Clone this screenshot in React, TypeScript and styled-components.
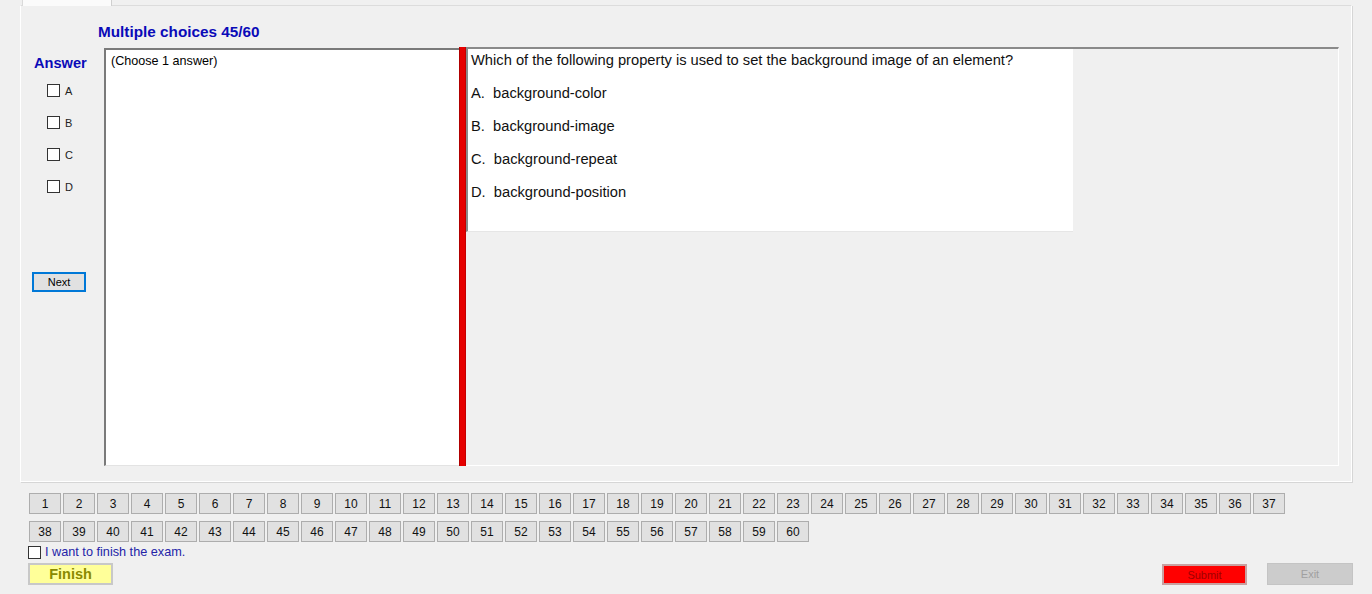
import React from "react";
import styled, { createGlobalStyle } from "styled-components";

const Global = createGlobalStyle`
  html, body { margin: 0; padding: 0; background: #f0f0f0; }
  body { font-family: "Liberation Sans", Arial, sans-serif; color: #000; }
  * { box-sizing: border-box; }
`;

const Window = styled.div`
  width: 1372px;
  height: 594px;
  background: #f0f0f0;
  display: flex;
  flex-direction: column;
  overflow: hidden;
`;

const TabStrip = styled.div`
  height: 5px;
  display: flex;
`;

const Tab = styled.div`
  margin-left: 22px;
  width: 90px;
  height: 6px;
  background: #fbfbfb;
  border-left: 1px solid #dadada;
  border-right: 1px solid #cfcfcf;
  position: relative;
  z-index: 1;
`;

const TabPage = styled.div`
  margin-left: 20px;
  width: 1332px;
  height: 477px;
  border: 1px solid #ffffff;
  border-top-color: #dcdcdc;
  box-shadow: 1px 1px 0 #d6d6d6;
  display: flex;
  flex-direction: column;
`;

const Title = styled.div`
  margin: 18px 0 0 77px;
  height: 16px;
  line-height: 16px;
  font-size: 15.3px;
  font-weight: bold;
  color: #0a0ab8;
`;

const Body = styled.div`
  margin-top: 7px;
  display: flex;
  height: 419px;
`;

const AnswerCol = styled.div`
  width: 83px;
  display: flex;
  flex-direction: column;
  padding-top: 8px;
`;

const AnswerLabel = styled.div`
  margin-left: 13px;
  height: 16px;
  line-height: 16px;
  font-size: 14.6px;
  font-weight: bold;
  color: #0a0ab8;
`;

const OptionList = styled.div`
  margin-top: 13px;
  margin-left: 26px;
  display: flex;
  flex-direction: column;
  gap: 19px;
`;

const OptionRow = styled.div`
  display: flex;
  align-items: center;
  gap: 5px;
  height: 13px;
  font-size: 11px;
  color: #222;
`;

const CheckBox = styled.span`
  display: inline-block;
  width: 13px;
  height: 13px;
  border: 1px solid #333333;
  background: #ffffff;
  flex: none;
`;

const NextButton = styled.button`
  margin: 79px 0 0 11px;
  width: 54px;
  height: 20px;
  border: 2px solid #0078d7;
  background: #e1e1e1;
  font-family: "Liberation Sans", Arial, sans-serif;
  font-size: 11px;
  color: #000;
  padding: 0;
`;

const Main = styled.div`
  display: flex;
  width: 1235px;
  height: 419px;
`;

const ListBox = styled.div`
  width: 355px;
  margin-top: 1px;
  background: #ffffff;
  border-top: 2px solid #7a7a7a;
  border-left: 2px solid #7a7a7a;
  border-bottom: 1px solid #e3e3e3;
  padding: 4px 0 0 5px;
  font-size: 12.6px;
`;

const RedBar = styled.div`
  width: 7px;
  background: #e60000;
  border-left: 1px solid #b00000;
  border-right: 1px solid #c40000;
`;

const RightPanel = styled.div`
  flex: 1;
  border-top: 2px solid #8a8a8a;
  border-right: 1px solid #ffffff;
  border-bottom: 1px solid #ffffff;
  display: flex;
  align-items: flex-start;
`;

const QuestionBox = styled.div`
  width: 607px;
  height: 183px;
  background: #ffffff;
  border-left: 2px solid #8a8a8a;
  border-bottom: 1px solid #e6e6e6;
  padding: 3px 0 0 3px;
  display: flex;
  flex-direction: column;
  gap: 17px;
`;

const QLine = styled.div`
  font-size: 14.7px;
  line-height: 16px;
  white-space: pre;
  color: #111;
`;

const NumGrid = styled.div`
  margin: 11px 0 0 29px;
  width: 1260px;
  display: flex;
  flex-wrap: wrap;
  column-gap: 2px;
  row-gap: 7px;
`;

const NumButton = styled.button`
  width: 32px;
  height: 21px;
  padding: 0;
  background: #e1e1e1;
  border: 1px solid #adadad;
  font-family: "Liberation Sans", Arial, sans-serif;
  font-size: 12px;
  color: #111;
`;

const ConfirmRow = styled.div`
  margin: 3px 0 0 28px;
  display: flex;
  align-items: center;
  gap: 4px;
  height: 14px;
  font-size: 12.7px;
  color: #2424a8;
`;

const Footer = styled.div`
  margin-top: 4px;
  padding: 0 19px 0 28px;
  display: flex;
  align-items: flex-start;
`;

const FinishButton = styled.button`
  width: 85px;
  height: 22px;
  padding: 0;
  background: #ffff99;
  border: 2px solid #c8c8c8;
  font-family: "Liberation Sans", Arial, sans-serif;
  font-size: 14.5px;
  font-weight: bold;
  color: #8a8a00;
`;

const RightButtons = styled.div`
  margin-left: auto;
  display: flex;
  gap: 20px;
`;

const SubmitButton = styled.button`
  margin-top: 1px;
  width: 85px;
  height: 21px;
  padding: 0;
  background: #ff0000;
  border: 2px solid #c9a0a0;
  font-family: "Liberation Sans", Arial, sans-serif;
  font-size: 11px;
  color: #a00000;
`;

const ExitButton = styled.button`
  width: 86px;
  height: 22px;
  padding: 0;
  background: #cccccc;
  border: 1px solid #c4c4c4;
  font-family: "Liberation Sans", Arial, sans-serif;
  font-size: 11px;
  color: #a0a0a0;
`;

const options = [
  "A.  background-color",
  "B.  background-image",
  "C.  background-repeat",
  "D.  background-position",
];

export default function App() {
  const nums = Array.from({ length: 60 }, (_, i) => i + 1);
  return (
    <Window>
      <Global />
      <TabStrip>
        <Tab />
      </TabStrip>
      <TabPage>
        <Title>Multiple choices 45/60</Title>
        <Body>
          <AnswerCol>
            <AnswerLabel>Answer</AnswerLabel>
            <OptionList>
              {["A", "B", "C", "D"].map((l) => (
                <OptionRow key={l}>
                  <CheckBox />
                  <span>{l}</span>
                </OptionRow>
              ))}
            </OptionList>
            <NextButton>Next</NextButton>
          </AnswerCol>
          <Main>
            <ListBox>(Choose 1 answer)</ListBox>
            <RedBar />
            <RightPanel>
              <QuestionBox>
                <QLine>Which of the following property is used to set the background image of an element?</QLine>
                {options.map((o) => (
                  <QLine key={o}>{o}</QLine>
                ))}
              </QuestionBox>
            </RightPanel>
          </Main>
        </Body>
      </TabPage>
      <NumGrid>
        {nums.map((n) => (
          <NumButton key={n}>{n}</NumButton>
        ))}
      </NumGrid>
      <ConfirmRow>
        <CheckBox />
        <span>I want to finish the exam.</span>
      </ConfirmRow>
      <Footer>
        <FinishButton>Finish</FinishButton>
        <RightButtons>
          <SubmitButton>Submit</SubmitButton>
          <ExitButton>Exit</ExitButton>
        </RightButtons>
      </Footer>
    </Window>
  );
}
